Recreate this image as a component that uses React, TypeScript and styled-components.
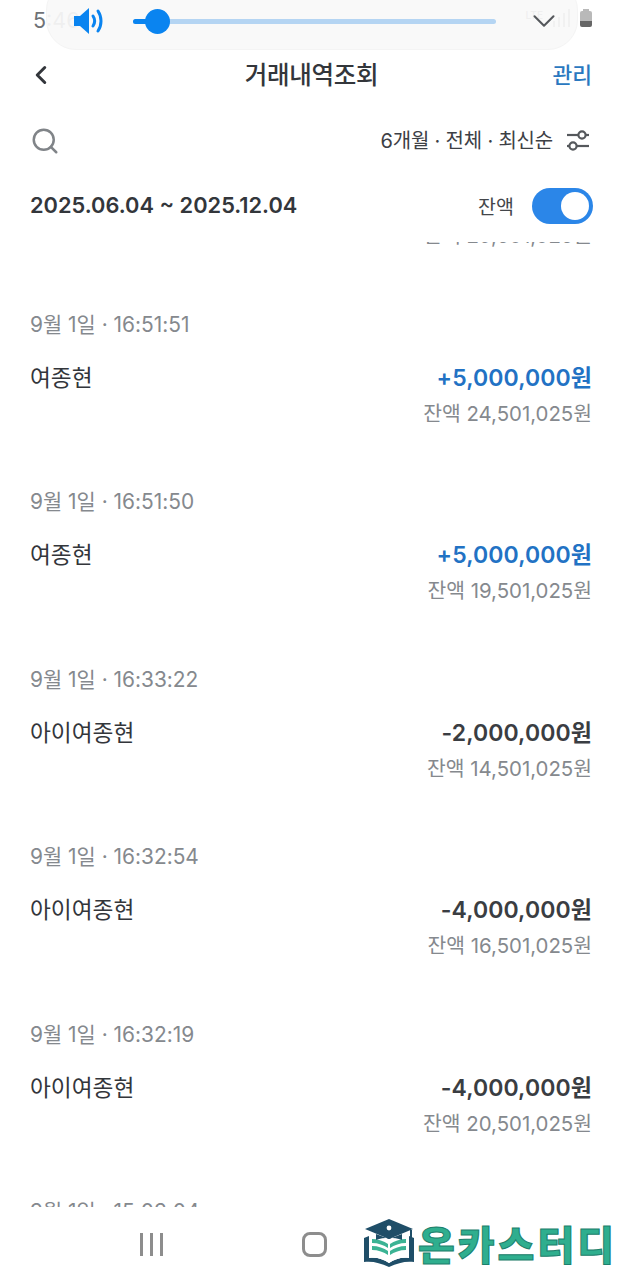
import React from "react";
import styled, {createGlobalStyle} from "styled-components";
import {ChevronDown, ChevronLeft, Search} from "lucide-react";

const GlobalStyle = createGlobalStyle`
  html, body {
    margin: 0;
    padding: 0;
    background: #fff;
  }
  * {
    box-sizing: border-box;
  }
`;

const Screen = styled.div`
  position: relative;
  width: 623px;
  height: 1280px;
  overflow: hidden;
  display: flex;
  flex-direction: column;
  background: #fff;
  font-family: Inter, "Noto Sans CJK KR", sans-serif;
  color: #33363b;
`;

//--------Status bar + volume overlay--------------------------------
const StatusBar = styled.div`
  height: 40px;
  padding: 0 31px 0 33px;
  display: flex;
  align-items: center;
  justify-content: space-between;
  font-size: 21.5px;
  color: #6f7276;
`;
const StatusRight = styled.div`
  display: flex;
  align-items: center;
  gap: 10px;
`;
const Lte = styled.span`
  font-size: 10px;
  font-weight: 600;
  margin-bottom: 10px;
  color: #777;
`;
const SignalBars = styled.div`
  display: flex;
  align-items: flex-end;
  gap: 3px;
  height: 18px;
  margin-top: -4px;
`;
const SignalBar = styled.div<{$h: number}>`
  width: 2px;
  height: ${props => props.$h}px;
  background: #888;
`;
const Battery = styled.div`
  position: relative;
  width: 12px;
  height: 16px;
  margin-top: -2px;
  border-radius: 2px;
  background: linear-gradient(#b9b9b9 0 65%, #666 65% 100%);
  &::before {
    content: "";
    position: absolute;
    left: 3px;
    top: -2px;
    width: 6px;
    height: 2px;
    background: #b9b9b9;
  }
`;
const VolumePanel = styled.div`
  position: absolute;
  top: -20px;
  left: 46px;
  width: 532px;
  height: 70px;
  padding: 12px 0 0 26px;
  border-radius: 30px;
  background: rgba(249, 249, 249, 0.93);
  border: 1px solid #f4f4f4;
  display: flex;
  align-items: center;
`;
const SliderTrack = styled.div`
  position: relative;
  margin-left: 28px;
  width: 363px;
  height: 5px;
  border-radius: 3px;
  background: #b5d5f3;
`;
const SliderFill = styled.div`
  position: absolute;
  left: 0;
  top: 0;
  height: 5px;
  width: 20px;
  border-radius: 3px;
  background: #0a84f0;
`;
const SliderThumb = styled.div`
  position: absolute;
  left: 12px;
  top: -10px;
  width: 25px;
  height: 25px;
  border-radius: 50%;
  background: #0a84f0;
`;
const CollapseIcon = styled(ChevronDown)`
  margin-left: 29px;
  color: #55585c;
`;

//--------Header--------------------------------
const NavBar = styled.div`
  position: relative;
  height: 70px;
  padding: 0 31px 0 26px;
  display: flex;
  align-items: center;
  justify-content: space-between;
`;
const NavTitle = styled.h1`
  position: absolute;
  left: 0;
  right: 0;
  top: 20px;
  margin: 0;
  text-align: center;
  font-size: 24.5px;
  line-height: 30px;
  font-weight: 500;
  letter-spacing: -0.3px;
  color: #33363b;
`;
const ManageLink = styled.span`
  margin-top: -3px;
  font-size: 21.5px;
  font-weight: 500;
  color: #2a78c0;
`;
const FilterRow = styled.div`
  height: 62px;
  padding: 0 33px 0 30px;
  display: flex;
  align-items: center;
  justify-content: space-between;
`;
const FilterLabel = styled.div`
  display: flex;
  align-items: center;
  gap: 13px;
  font-size: 20px;
  line-height: 26px;
  font-weight: 400;
  letter-spacing: -0.2px;
  color: #3d4045;
`;
const PeriodRow = styled.div`
  height: 70px;
  padding: 0 30px 4px;
  display: flex;
  align-items: center;
  justify-content: space-between;
`;
const Period = styled.div`
  font-size: 21.8px;
  font-weight: 600;
  letter-spacing: 0;
  color: #33363b;
`;
const BalanceToggle = styled.div`
  display: flex;
  align-items: center;
  gap: 18px;
  font-size: 19.5px;
  color: #43464a;
`;
const Switch = styled.div`
  width: 61px;
  height: 36px;
  margin-top: 2px;
  padding: 4px;
  border-radius: 18px;
  background: #2b86e8;
  display: flex;
  justify-content: flex-end;
`;
const SwitchKnob = styled.div`
  width: 28px;
  height: 28px;
  border-radius: 50%;
  background: #fff;
`;

//--------List--------------------------------
const ListViewport = styled.div`
  height: 965px;
  overflow: hidden;
`;
const List = styled.ul`
  margin: -20px 0 0 0;
  padding: 0 31px 0 30px;
  list-style: none;
`;
const ClippedBalance = styled.li`
  height: 28px;
  margin-bottom: 49px;
  text-align: right;
  font-size: 20.4px;
  line-height: 28px;
  color: #85898e;
`;
const Item = styled.li`
  height: 177.4px;
  padding-top: 12px;
`;
const When = styled.div`
  height: 28px;
  line-height: 28px;
  font-size: 20.9px;
  letter-spacing: 0;
  color: #85898e;
`;
const ItemBody = styled.div`
  margin-top: 24px;
  display: flex;
  justify-content: space-between;
`;
const Name = styled.div`
  font-size: 22.7px;
  line-height: 30px;
  color: #33363b;
`;
const Amounts = styled.div`
  text-align: right;
`;
const Amount = styled.div<{$deposit: boolean}>`
  font-size: 23px;
  line-height: 30px;
  font-weight: 600;
  letter-spacing: 0.1px;
  color: ${props => (props.$deposit ? "#2272c4" : "#3a3d42")};
`;
const Balance = styled.div`
  margin-top: 7px;
  font-size: 20.4px;
  line-height: 28px;
  color: #85898e;
`;

//--------System nav + watermark--------------------------------
const SystemNav = styled.div`
  flex: 1;
  display: flex;
  align-items: center;
  padding: 0 0 0 140px;
  gap: 139px;
`;
const RecentBars = styled.div`
  display: flex;
  gap: 7px;
  margin-top: 2px;
`;
const RecentBar = styled.div`
  width: 3px;
  height: 23px;
  background: #8d8d8d;
`;
const HomeButton = styled.div`
  width: 25px;
  height: 25px;
  margin-top: 2px;
  border: 3px solid #8d8d8d;
  border-radius: 8px;
`;
const Watermark = styled.div`
  position: absolute;
  left: 362px;
  top: 1218px;
  display: flex;
  align-items: flex-end;
  gap: 2px;
`;
const WatermarkText = styled.span`
  font-family: "Noto Sans CJK KR", sans-serif;
  font-size: 40px;
  line-height: 46px;
  font-weight: 900;
  letter-spacing: 3px;
  white-space: nowrap;
  color: #2fae8e;
  -webkit-text-stroke: 1px #1c7f6c;
  margin-bottom: 2px;
`;

const VolumeIcon = () => (
    <svg width="32" height="28" viewBox="0 0 32 28">
        <path d="M1 9h6l9-8v26l-9-8H1z" fill="#0a84f0"/>
        <path d="M20 9c2 3 2 7 0 10" fill="none" stroke="#0a84f0" strokeWidth="3" strokeLinecap="round"/>
        <path d="M25 4c4 6 4 14 0 20" fill="none" stroke="#0a84f0" strokeWidth="3" strokeLinecap="round"/>
    </svg>
);

const FilterIcon = () => (
    <svg width="24" height="22" viewBox="0 0 24 22" fill="none" stroke="#55585c" strokeWidth="2.2">
        <path d="M1 5h22"/>
        <circle cx="16" cy="5" r="3.6" fill="#fff"/>
        <path d="M1 16h22"/>
        <circle cx="7" cy="16" r="3.6" fill="#fff"/>
    </svg>
);

const LogoIcon = () => (
    <svg width="54" height="50" viewBox="0 0 54 50">
        <path d="M2 44V20l5-2v22c8-1 14 1 20 5 6-4 12-6 20-5V18l5 2v24c-9-1-16 1-25 5-9-4-16-6-25-5z" fill="#1f4e68"/>
        <path d="M7 18c8-1 15 1 20 5 5-4 12-6 20-5v22c-8-1-14 1-20 5-6-4-12-6-20-5z" fill="#fff"/>
        <path d="M10 21c6 0 12 2 16 5v4c-4-3-10-5-16-5zM44 21c-6 0-12 2-16 5v4c4-3 10-5 16-5zM10 28c6 0 12 2 16 5v4c-4-3-10-5-16-5zM44 28c-6 0-12 2-16 5v4c4-3 10-5 16-5z" fill="#3bb394"/>
        <path d="M27 1L3 11l24 10 24-10z" fill="#1f4e68"/>
        <path d="M14 16v6c8-3 18-3 26 0v-6l-13 5z" fill="#1f4e68"/>
        <circle cx="27" cy="10" r="2.4" fill="#fff"/>
        <path d="M49 12v9" stroke="#1f4e68" strokeWidth="2"/>
    </svg>
);

const transactions = [
    {when: "9월 1일 · 16:51:51", name: "여종현", amount: "+5,000,000원", balance: "잔액 24,501,025원"},
    {when: "9월 1일 · 16:51:50", name: "여종현", amount: "+5,000,000원", balance: "잔액 19,501,025원"},
    {when: "9월 1일 · 16:33:22", name: "아이여종현", amount: "-2,000,000원", balance: "잔액 14,501,025원"},
    {when: "9월 1일 · 16:32:54", name: "아이여종현", amount: "-4,000,000원", balance: "잔액 16,501,025원"},
    {when: "9월 1일 · 16:32:19", name: "아이여종현", amount: "-4,000,000원", balance: "잔액 20,501,025원"},
];

const App = () => {
    return (
        <Screen>
            <GlobalStyle/>
            <StatusBar>
                <span>5:46</span>
                <StatusRight>
                    <Lte>LTE</Lte>
                    <SignalBars>
                        <SignalBar $h={6}/>
                        <SignalBar $h={10}/>
                        <SignalBar $h={14}/>
                        <SignalBar $h={18}/>
                    </SignalBars>
                    <Battery/>
                </StatusRight>
            </StatusBar>
            <VolumePanel>
                <VolumeIcon/>
                <SliderTrack>
                    <SliderFill/>
                    <SliderThumb/>
                </SliderTrack>
                <CollapseIcon size={38} strokeWidth={1.3}/>
            </VolumePanel>
            <NavBar>
                <ChevronLeft size={30} strokeWidth={2.4} color="#33363b"/>
                <NavTitle>거래내역조회</NavTitle>
                <ManageLink>관리</ManageLink>
            </NavBar>
            <FilterRow>
                <Search size={30} strokeWidth={2} color="#808488"/>
                <FilterLabel>
                    6개월 · 전체 · 최신순
                    <FilterIcon/>
                </FilterLabel>
            </FilterRow>
            <PeriodRow>
                <Period>2025.06.04 ~ 2025.12.04</Period>
                <BalanceToggle>
                    잔액
                    <Switch><SwitchKnob/></Switch>
                </BalanceToggle>
            </PeriodRow>
            <ListViewport>
                <List>
                    <ClippedBalance>잔액 29,501,025원</ClippedBalance>
                    {transactions.map((it) => (
                        <Item key={it.when}>
                            <When>{it.when}</When>
                            <ItemBody>
                                <Name>{it.name}</Name>
                                <Amounts>
                                    <Amount $deposit={it.amount.startsWith("+")}>{it.amount}</Amount>
                                    <Balance>{it.balance}</Balance>
                                </Amounts>
                            </ItemBody>
                        </Item>
                    ))}
                    <Item>
                        <When>9월 1일 · 15:03:04</When>
                    </Item>
                </List>
            </ListViewport>
            <SystemNav>
                <RecentBars>
                    <RecentBar/>
                    <RecentBar/>
                    <RecentBar/>
                </RecentBars>
                <HomeButton/>
            </SystemNav>
            <Watermark>
                <LogoIcon/>
                <WatermarkText>온카스터디</WatermarkText>
            </Watermark>
        </Screen>
    );
};
export default App;
